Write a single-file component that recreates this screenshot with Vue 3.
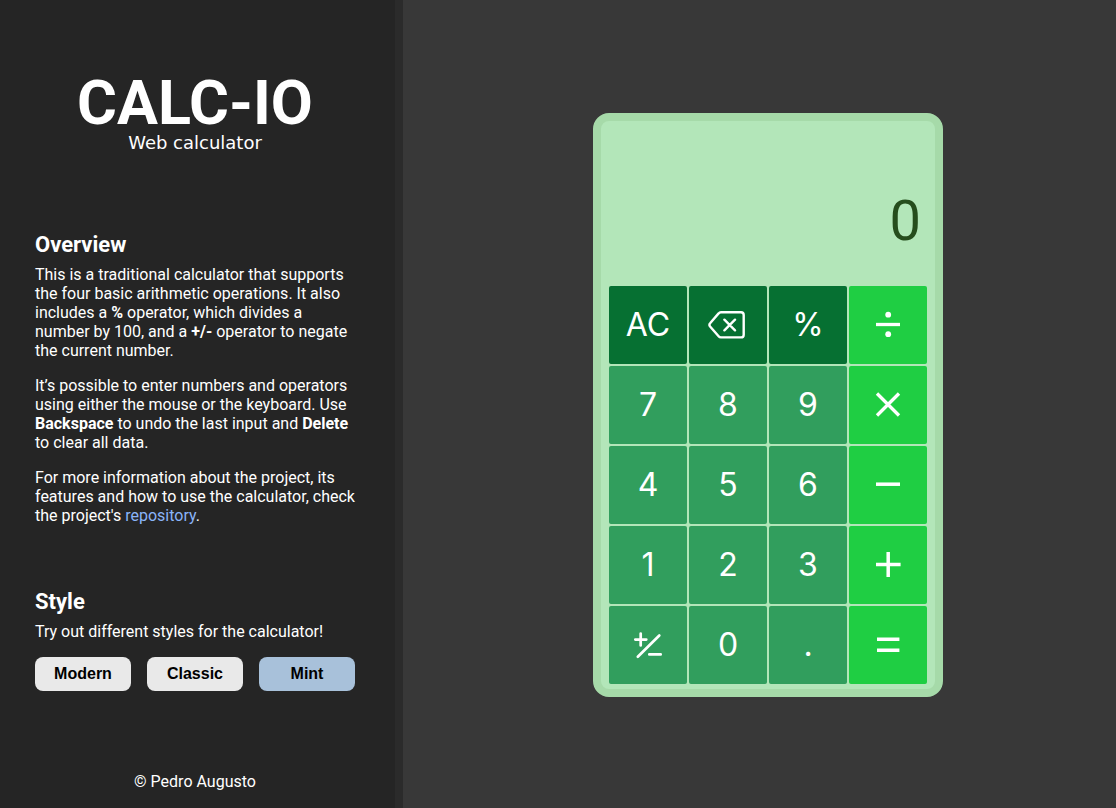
<script setup>
import { ref } from 'vue'

const styles = ['Modern', 'Classic', 'Mint']
const current = ref('Mint')
const display = ref('0')

const keys = [
  { label: 'AC', kind: 'function' },
  { label: 'Backspace', kind: 'function', icon: 'back' },
  { label: '%', kind: 'function' },
  { label: 'Divide', kind: 'operator', icon: 'divide' },
  { label: '7' }, { label: '8' }, { label: '9' },
  { label: 'Multiply', kind: 'operator', icon: 'times' },
  { label: '4' }, { label: '5' }, { label: '6' },
  { label: 'Subtract', kind: 'operator', icon: 'minus' },
  { label: '1' }, { label: '2' }, { label: '3' },
  { label: 'Add', kind: 'operator', icon: 'plus' },
  { label: 'Negate', icon: 'negate' },
  { label: '0' }, { label: '.' },
  { label: 'Equals', kind: 'operator', icon: 'equals' }
]

const icons = {
  back: { d: 'M13 7.3H33A2.7 2.7 0 0 1 35.7 10V29.7A2.7 2.7 0 0 1 33 32.4H13A3 3 0 0 1 10.6 31.3L2.3 21.8A2.8 2.8 0 0 1 2.3 18L10.6 8.4A3 3 0 0 1 13 7.3ZM16.4 14.7L27 25.3M27 14.7L16.4 25.3', w: 2.4, cap: 'round' },
  divide: { d: 'M8 19.5H32', w: 3.3, cap: 'butt', dots: [9.7, 29.2] },
  times: { d: 'M9 8.5L31 30.5M31 8.5L9 30.5', w: 3.3, cap: 'butt' },
  minus: { d: 'M8 19.2H32', w: 3.5, cap: 'butt' },
  plus: { d: 'M8 19.5H32.6M20.2 7V32', w: 3.5, cap: 'butt' },
  equals: { d: 'M9 14.2H31.4M9 25.2H31.4', w: 3.5, cap: 'butt' },
  negate: { d: 'M7.3 14.6H18.3M12.7 8.5V20.5M9.8 31.7L31.3 10.5M21.3 29.4H32.7', w: 2.7, cap: 'round' }
}
</script>

<template>
  <div class="page">
    <aside class="sidebar">
      <header class="brand">
        <h1>CALC-IO</h1>
        <p>Web calculator</p>
      </header>

      <section class="overview">
        <h2>Overview</h2>
        <p>This is a traditional calculator that supports the four basic arithmetic operations. It also includes a <b>%</b> operator, which divides a number by 100, and a <b>+/-</b> operator to negate the current number.</p>
        <p>It’s possible to enter numbers and operators using either the mouse or the keyboard. Use <b>Backspace</b> to undo the last input and <b>Delete</b> to clear all data.</p>
        <p>For more information about the project, its features and how to use the calculator, check the project's <a href="#">repository</a>.</p>
      </section>

      <section>
        <h2>Style</h2>
        <p>Try out different styles for the calculator!</p>
        <div class="styles">
          <button
            v-for="s in styles"
            :key="s"
            type="button"
            :class="{ active: s === current }"
            @click="current = s"
          >{{ s }}</button>
        </div>
      </section>

      <footer>© Pedro Augusto</footer>
    </aside>

    <main>
      <div class="calculator">
        <output class="display">{{ display }}</output>
        <div class="keys">
          <button v-for="k in keys" :key="k.label" type="button" :class="k.kind" :aria-label="k.label">
            <svg
              v-if="k.icon"
              viewBox="0 0 40 40"
              width="40"
              height="40"
              fill="none"
              stroke="currentColor"
              stroke-linejoin="round"
              :stroke-width="icons[k.icon].w"
              :stroke-linecap="icons[k.icon].cap"
            >
              <path :d="icons[k.icon].d" />
              <circle
                v-for="y in icons[k.icon].dots"
                :key="y"
                cx="20.2"
                :cy="y"
                r="2.9"
                fill="currentColor"
                stroke="none"
              />
            </svg>
            <template v-else>{{ k.label }}</template>
          </button>
        </div>
      </div>
    </main>
  </div>
</template>

<style>
body {
  margin: 0;
  background: #383838;
}
</style>

<style scoped>
.page {
  display: flex;
  min-height: 100vh;
  font: 16px/19px Roboto, sans-serif;
  color: #fff;
}

.sidebar {
  box-sizing: border-box;
  flex: 0 0 403px;
  display: flex;
  flex-direction: column;
  padding: 73px 40px 17px 35px;
  background: #252525;
  border-right: 8px solid #2b2b2b;
}

.brand {
  text-align: center;
  margin-bottom: 79px;
}

h1 {
  margin: 0;
  font-size: 61px;
  line-height: 60px;
  font-weight: 700;
}

.brand p {
  margin: 0;
  font: 18px/20px "DejaVu Sans", sans-serif;
}

h2 {
  margin: 0 0 7px;
  font-size: 22px;
  line-height: 26px;
  font-weight: 700;
}

section p {
  margin: 0 0 16px;
}

.overview {
  margin-bottom: 48px;
}

a {
  color: #8ab4f8;
  text-decoration: none;
}

.styles {
  display: grid;
  grid-template-columns: repeat(3, 1fr);
  gap: 16px;
}

.styles button {
  padding: 0;
  height: 34px;
  border: 0;
  border-radius: 8px;
  background: #e9e9e9;
  color: #000;
  font: bold 16px/18px "Liberation Sans", Arial, sans-serif;
}

.styles .active {
  background: #a8c1da;
}

footer {
  margin-top: auto;
  text-align: center;
}

main {
  flex: 1;
  display: flex;
  align-items: center;
  justify-content: center;
  padding: 2px 0 0 17px;
}

.calculator {
  display: flex;
  flex-direction: column;
  padding: 0 8px 5px;
  border: 8px solid #a6daa9;
  border-radius: 16px;
  background: #b3e6b9;
}

.display {
  box-sizing: border-box;
  height: 165px;
  padding: 64px 6px 0 8px;
  font: 56px/72px Roboto, sans-serif;
  text-align: right;
  color: #264d1d;
}

.keys {
  display: grid;
  grid-template-columns: repeat(4, 78px);
  grid-auto-rows: 78px;
  gap: 2px;
}

.keys button {
  display: flex;
  align-items: center;
  justify-content: center;
  padding: 0;
  border: 0;
  border-radius: 2px;
  background: #319e5d;
  color: #fff;
  font: 32px/40px Inter, sans-serif;
}

.keys .function {
  background: #067032;
}

.keys .operator {
  background: #1fce43;
}
</style>
